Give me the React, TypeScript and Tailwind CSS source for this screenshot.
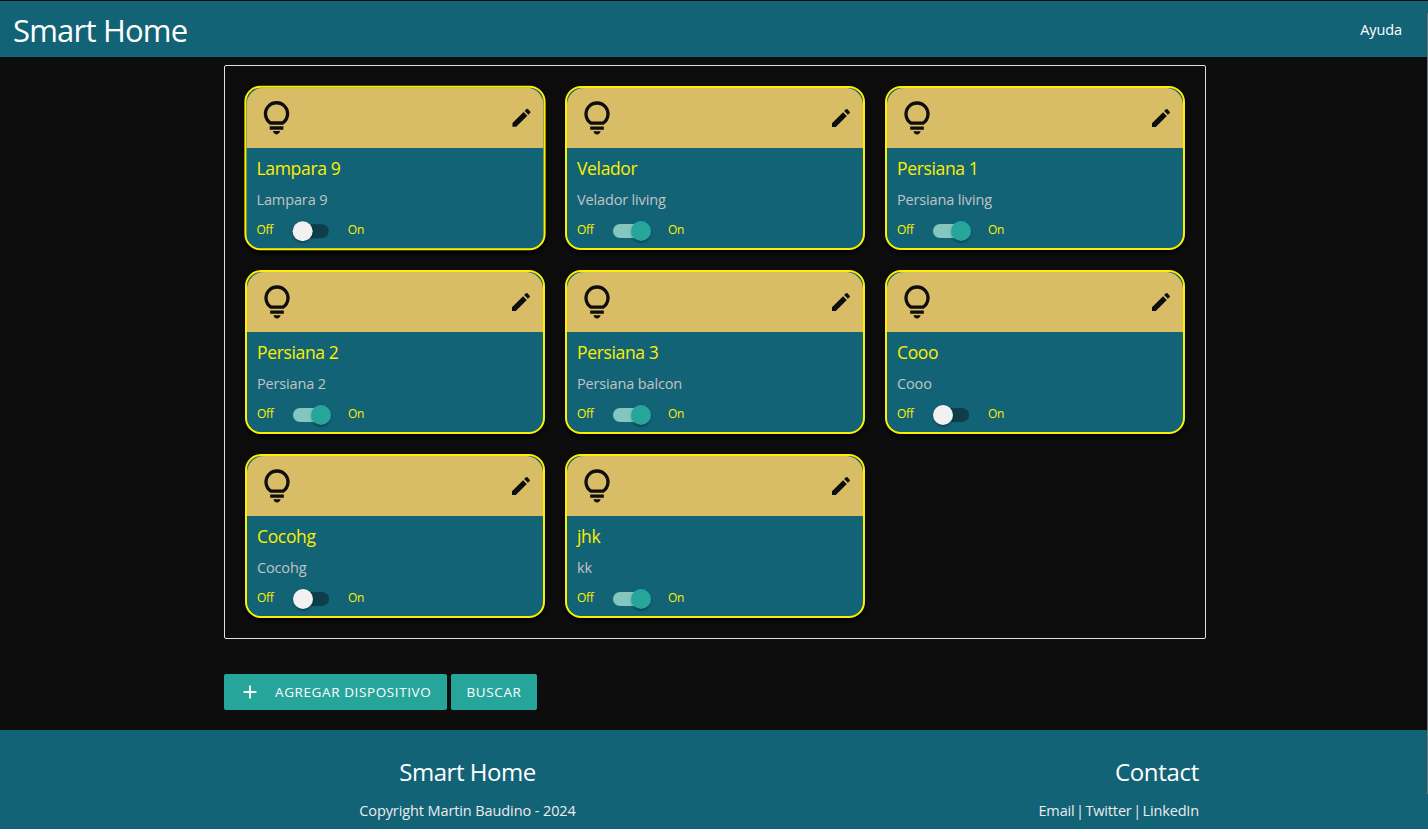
import { useState } from "react";
import { MdAdd, MdEdit } from "react-icons/md";

type Device = { name: string; description: string; on: boolean; active?: boolean };

const initialDevices: Device[] = [
  { name: "Lampara 9", description: "Lampara 9", on: false, active: true },
  { name: "Velador", description: "Velador living", on: true },
  { name: "Persiana 1", description: "Persiana living", on: true },
  { name: "Persiana 2", description: "Persiana 2", on: true },
  { name: "Persiana 3", description: "Persiana balcon", on: true },
  { name: "Cooo", description: "Cooo", on: false },
  { name: "Cocohg", description: "Cocohg", on: false },
  { name: "jhk", description: "kk", on: true },
];

function BulbIcon() {
  return (
    <svg viewBox="0 0 40 40" className="size-10" fill="currentColor">
      <path
        d="M14 25.2A11 11 0 1 1 26 25.2Z"
        fill="none"
        stroke="currentColor"
        strokeWidth="3.3"
        strokeLinejoin="round"
      />
      <path d="M13.2 28.4h13.6v3.4H13.2zM16.4 33.2h7.2c-.4 1.6-1.7 3.4-3.6 3.4s-3.2-1.8-3.6-3.4z" />
    </svg>
  );
}

function Switch({ on, onToggle }: { on: boolean; onToggle: () => void }) {
  return (
    <button
      role="switch"
      aria-checked={on}
      onClick={onToggle}
      className={`flex h-3.5 w-9 items-center rounded-full ${on ? "bg-[#84c7c1]" : "bg-[#0d3e4a]"}`}
    >
      <span
        className={`size-5 shrink-0 rounded-full shadow-[0_3px_1px_-2px_rgba(0,0,0,0.2),0_2px_2px_0_rgba(0,0,0,0.14),0_1px_5px_0_rgba(0,0,0,0.12)] ${on ? "ml-[18px] bg-[#26a69a]" : "bg-[#f1f1f1]"}`}
      />
    </button>
  );
}

function DeviceCard({ device, onToggle }: { device: Device; onToggle: () => void }) {
  return (
    <article
      className={`h-[164px] overflow-hidden rounded-[16px] border-2 border-[#ffee00] bg-[#136377] shadow-[0_2px_2px_0_rgba(0,0,0,0.6),0_3px_6px_0_rgba(0,0,0,0.5)] ${device.active ? "scale-[1.004]" : ""}`}
    >
      <div className="flex h-[60px] items-center justify-between rounded-t-[17px] bg-[#d8bc66] px-2.5 text-[#0d0d0d]">
        <BulbIcon />
        <MdEdit className="size-6" />
      </div>
      <div className="px-2.5">
        <h2 className="mt-[7px] text-[17.5px] leading-[26px] tracking-[-0.35px] text-[#ffee00]">{device.name}</h2>
        <p className="mt-2 text-[14.5px] leading-[22px] tracking-[-0.15px] text-[#c3c3c3]">{device.description}</p>
        <div className="mt-[10px] flex h-5 items-center text-[12px] leading-5 tracking-[-0.3px] text-[#ffee00]">
          <span className="w-9 -translate-y-px">Off</span>
          <Switch on={device.on} onToggle={onToggle} />
          <span className="ml-[19px] -translate-y-px">On</span>
        </div>
      </div>
    </article>
  );
}

export default function App() {
  const [devices, setDevices] = useState(initialDevices);
  const toggle = (index: number) =>
    setDevices((list) => list.map((d, i) => (i === index ? { ...d, on: !d.on } : d)));

  return (
    <div className="relative flex h-[829px] w-full flex-col overflow-hidden bg-[#0d0d0d] font-['Open_Sans',sans-serif] text-white">
      <header className="mt-px flex h-14 shrink-0 items-start justify-between bg-[#136377] pr-[26px] pl-[13px]">
        <h1 className="text-[31px] leading-[59px] tracking-[-0.8px]">Smart Home</h1>
        <a className="text-[14.5px] leading-[57px] tracking-[-0.1px]">Ayuda</a>
      </header>

      <main className="ml-[224px] h-[673px] w-[982px] shrink-0 pt-2">
        <section className="grid h-[574px] grid-cols-[300px_300px_300px] content-start gap-5 rounded-[2px] border border-[#e0e0e0] p-5">
          {devices.map((device, index) => (
            <DeviceCard key={device.name} device={device} onToggle={() => toggle(index)} />
          ))}
        </section>
        <div className="mt-[35px] flex gap-1 text-[13.5px] leading-[37px] tracking-[0.6px]">
          <button className="flex h-9 w-[223px] items-center rounded-[2px] bg-[#26a69a] pl-[15px]">
            <MdAdd className="size-[22px]" />
            <span className="ml-[14px] whitespace-nowrap">AGREGAR DISPOSITIVO</span>
          </button>
          <button className="h-9 w-[86px] rounded-[2px] bg-[#26a69a]">BUSCAR</button>
        </div>
      </main>

      <footer className="flex h-[99px] shrink-0 items-start bg-[#136377] pt-[26px]">
        <div className="ml-[224px] w-[487px] text-center">
          <h3 className="text-[24px] leading-8 tracking-[-0.45px]">Smart Home</h3>
          <p className="mt-3 text-[14.5px] leading-[22px] tracking-[-0.1px] text-[#ececec]">
            Copyright Martin Baudino - 2024
          </p>
        </div>
        <div className="w-[488px] text-right">
          <h3 className="text-[24px] leading-8 tracking-[-0.3px]">Contact</h3>
          <p className="mt-3 text-[14.5px] leading-[22px] tracking-[-0.15px] text-[#ececec] [word-spacing:-2.1px]">
            Email | Twitter | LinkedIn
          </p>
        </div>
      </footer>
      <div className="absolute top-[13px] right-0 h-[781px] w-px bg-[#6e7476]" />
    </div>
  );
}
